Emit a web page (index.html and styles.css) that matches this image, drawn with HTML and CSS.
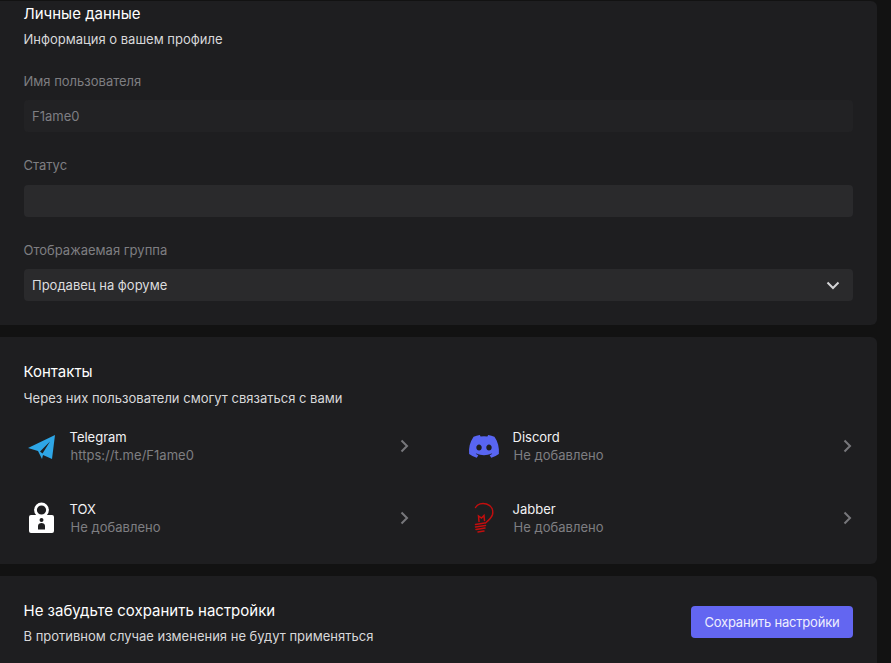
FILE: index.html
```html
<!DOCTYPE html>
<html lang="ru">
<head>
  <meta charset="UTF-8" />
  <meta name="viewport" content="width=device-width, initial-scale=1.0"/>
  <title>Настройки профиля</title>
  <link rel="stylesheet" href="styles.css">
</head>
<body>
  <div class="page">
    <section class="card card-profile">
      <h3>Личные данные</h3>
      <p class="sub">Информация о вашем профиле</p>

      <label class="field-label">Имя пользователя</label>
      <div class="input input-disabled">F1ame0</div>

      <label class="field-label">Статус</label>
      <div class="input"></div>

      <label class="field-label">Отображаемая группа</label>
      <div class="input input-select">
        <span>Продавец на форуме</span>
        <svg class="select-arrow" width="14" height="9" viewBox="0 0 14 9"><path d="M1.5 1.5 7 7l5.5-5.5" fill="none" stroke="#d4d4d6" stroke-width="2"/></svg>
      </div>
    </section>

    <section class="card card-contacts">
      <h3>Контакты</h3>
      <p class="sub">Через них пользователи смогут связаться с вами</p>

      <div class="contacts">
        <div class="contact">
          <svg class="contact-icon" width="36" height="36" viewBox="0 0 36 36"><path fill-rule="evenodd" d="M4 20 31 7l-3 24-9-4-1 4-4-8zM16 23.500 26 13.500 18.500 25.500z" fill="#2ea6e6"/></svg>
          <div class="contact-text">
            <div class="contact-name">Telegram</div>
            <div class="contact-value">https://t.me/F1ame0</div>
          </div>
          <svg class="chevron" width="9" height="14" viewBox="0 0 9 14"><path d="m1.5 1.5 5.5 5.5-5.5 5.5" fill="none" stroke="#77777b" stroke-width="2"/></svg>
        </div>

        <div class="contact">
          <svg class="contact-icon" width="36" height="36" viewBox="-1.6 -2.7 28.8 28.8"><path d="M20.317 4.37a19.791 19.791 0 0 0-4.885-1.515.074.074 0 0 0-.079.037c-.21.375-.444.864-.608 1.25a18.27 18.27 0 0 0-5.487 0 12.64 12.64 0 0 0-.617-1.25.077.077 0 0 0-.079-.037A19.736 19.736 0 0 0 3.677 4.37a.07.07 0 0 0-.032.027C.533 9.046-.32 13.58.099 18.057a.082.082 0 0 0 .031.057 19.9 19.9 0 0 0 5.993 3.03.078.078 0 0 0 .084-.028 14.09 14.09 0 0 0 1.226-1.994.076.076 0 0 0-.041-.106 13.107 13.107 0 0 1-1.872-.892.077.077 0 0 1-.008-.128 10.2 10.2 0 0 0 .372-.292.074.074 0 0 1 .077-.01c3.928 1.793 8.18 1.793 12.062 0a.074.074 0 0 1 .078.01c.12.098.246.198.373.292a.077.077 0 0 1-.006.127 12.299 12.299 0 0 1-1.873.892.077.077 0 0 0-.041.107c.36.698.772 1.362 1.225 1.993a.076.076 0 0 0 .084.028 19.839 19.839 0 0 0 6.002-3.03.077.077 0 0 0 .032-.054c.5-5.177-.838-9.674-3.549-13.66a.061.061 0 0 0-.031-.03zM8.02 15.33c-1.183 0-2.157-1.085-2.157-2.419 0-1.333.956-2.419 2.157-2.419 1.21 0 2.176 1.096 2.157 2.42 0 1.333-.956 2.418-2.157 2.418zm7.975 0c-1.183 0-2.157-1.085-2.157-2.419 0-1.333.955-2.419 2.157-2.419 1.21 0 2.176 1.096 2.157 2.42 0 1.333-.946 2.418-2.157 2.418z" fill="#5865f2"/></svg>
          <div class="contact-text">
            <div class="contact-name">Discord</div>
            <div class="contact-value">Не добавлено</div>
          </div>
          <svg class="chevron" width="9" height="14" viewBox="0 0 9 14"><path d="m1.5 1.5 5.5 5.5-5.5 5.5" fill="none" stroke="#77777b" stroke-width="2"/></svg>
        </div>

        <div class="contact">
          <svg class="contact-icon" width="36" height="36" viewBox="0 0 36 36"><circle cx="17.5" cy="10" r="6" fill="none" stroke="#fff" stroke-width="2.800"/><path fill-rule="evenodd" d="M7 15h21a2 2 0 0 1 2 2v14a2 2 0 0 1-2 2H7a2 2 0 0 1-2-2V17a2 2 0 0 1 2-2zm10.500 3a2 2 0 1 0 0 4 2 2 0 0 0 0-4zm0 5c-2 0-3.500 1.300-3.500 3v3.500h7V26c0-1.700-1.500-3-3.500-3z" fill="#fff"/></svg>
          <div class="contact-text">
            <div class="contact-name">TOX</div>
            <div class="contact-value">Не добавлено</div>
          </div>
          <svg class="chevron" width="9" height="14" viewBox="0 0 9 14"><path d="m1.5 1.5 5.5 5.5-5.5 5.5" fill="none" stroke="#77777b" stroke-width="2"/></svg>
        </div>

        <div class="contact">
          <svg class="contact-icon" width="36" height="36" viewBox="0 0 36 36"><g fill="none" stroke="#c20e0e" stroke-width="1.500" stroke-linecap="round"><path d="M8.500 7.500C10.500 4 15 2.500 19.500 4c5 1.700 7 6 6 10.500-1 3.500-4 6-7 8.500"/><path d="M8.500 24.500l9-1.500M8.500 27l10-1.500M9 29.500l9-1.500M11 32l6-1"/><path d="M12 21.500l-.5-5.500 3 2 2.500-2.500.5 5"/></g></svg>
          <div class="contact-text">
            <div class="contact-name">Jabber</div>
            <div class="contact-value">Не добавлено</div>
          </div>
          <svg class="chevron" width="9" height="14" viewBox="0 0 9 14"><path d="m1.5 1.5 5.5 5.5-5.5 5.5" fill="none" stroke="#77777b" stroke-width="2"/></svg>
        </div>
      </div>
    </section>

    <section class="card card-save">
      <div class="save-text">
        <h3>Не забудьте сохранить настройки</h3>
        <p class="sub">В противном случае изменения не будут применяться</p>
      </div>
      <button class="btn-save">Сохранить настройки</button>
    </section>
  </div>
</body>
</html>
```

FILE: styles.css
```css
* { box-sizing: border-box; }
body {
  margin: 0;
  height: 663px;
  overflow: hidden;
  background-color: #121212;
  color: #fff;
  font-family: Inter, 'Noto Sans', sans-serif;
}
.page {
  display: flex;
  flex-direction: column;
  gap: 12px;
  padding: 1px 14px 0 0;
}
.card {
  flex-shrink: 0;
  background-color: #1e1e20;
  border-radius: 0 6px 6px 0;
  padding: 0 24px;
}
h3 {
  margin: 0 0 0 -0.5px;
  font-size: 15px;
  line-height: 20px;
  font-weight: 400;
  color: #fff;
}
.sub {
  margin: 6px 0 0 -0.5px;
  font-size: 13px;
  line-height: 20px;
  font-weight: 400;
  color: #d8d8da;
}
.card-profile { height: 324px; padding-top: 3px; }
.card-profile .sub { line-height: 19px; margin-bottom: -1.25px; }
.field-label {
  display: block;
  margin: 23px 0 0 -0.5px;
  font-size: 13px;
  line-height: 20px;
  color: #7e7e82;
}
.input {
  height: 32px;
  margin-top: 9.5px;
  padding: 0 8px;
  display: flex;
  align-items: center;
  justify-content: space-between;
  border-radius: 4px;
  background-color: #2a2a2c;
  font-size: 13px;
  color: #dcdcde;
}
.input-disabled { background-color: #222224; color: #7e7e82; }
.select-arrow { margin-right: 5px; }

.card-contacts { height: 227px; padding-top: 25px; }
.contacts {
  display: grid;
  grid-template-columns: 1fr 1fr;
  column-gap: 57px;
  row-gap: 36px;
  margin-top: 20px;
}
.contact { display: flex; align-items: center; height: 36px; }
.contact-icon { flex-shrink: 0; margin-right: 9.5px; }
.contact-text { flex: 1; }
.contact-name { font-size: 13px; line-height: 18px; font-weight: 400; color: #f2f2f4; }
.contact-value { font-size: 13px; line-height: 18px; color: #7e7e82; margin-left: 1px; letter-spacing: 0.03px; }
.chevron { flex-shrink: 0; margin-right: 1px; }

.card-save {
  height: 92px;
  border-radius: 0 6px 0 0;
  display: flex;
  align-items: center;
  justify-content: space-between;
}
.save-text { margin-top: 3px; }
.save-text .sub { margin-top: 5px; }
.btn-save {
  width: 162px;
  height: 32px;
  border: 0;
  border-radius: 4px;
  background-color: #6366f1;
  color: #eeeefe;
  font-family: inherit;
  font-size: 13px;
  letter-spacing: -0.2px;
  cursor: pointer;
}
```
